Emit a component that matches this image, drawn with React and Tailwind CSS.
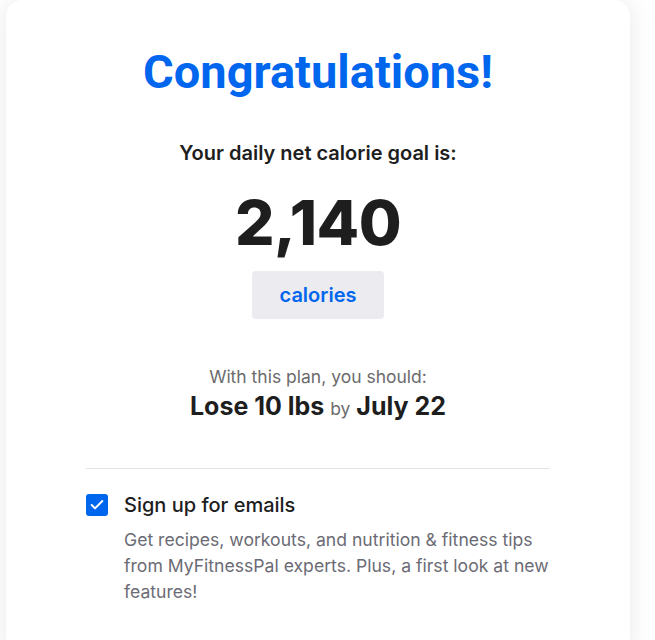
import { Check } from 'lucide-react';

export default function App() {
  return (
    <div className="min-h-[640px] bg-white pl-[6px] font-['Inter',sans-serif] text-[#1e1e1e]">
      <div className="w-[624px] min-h-[660px] rounded-2xl bg-white px-[80px] pt-[44px] shadow-[0_0_24px_rgba(0,0,0,0.09)]">
        <h1 className="text-center font-['Roboto',sans-serif] text-[47px] font-bold leading-[56px] text-[#0066ee]">
          Congratulations!
        </h1>

        <p className="mt-[39px] text-center text-[20px] font-semibold leading-[28px]">
          Your daily net calorie goal is:
        </p>
        <p className="mt-[18px] text-center text-[62px] font-extrabold leading-[76px] tracking-[-0.5px]">
          2,140
        </p>
        <div className="mt-[10px] flex justify-center">
          <button className="h-[48px] w-[132px] rounded-[4px] bg-[#ebebf0] text-[20px] font-semibold text-[#0066ee]">
            calories
          </button>
        </div>

        <p className="mt-[45px] text-center text-[17.5px] leading-[26px] text-[#6b6b6b]">
          With this plan, you should:
        </p>
        <p className="mt-[1px] text-center text-[25px] font-bold leading-[30px]">
          Lose 10 lbs <span className="text-[17.5px] font-normal text-[#6b6b6b]">by</span> July 22
        </p>

        <hr className="mt-[44px] border-t border-[#e2e2e2]" />

        <div className="mt-[22px] flex gap-[16px]">
          <div className="mt-[3px] flex h-[22px] w-[22px] shrink-0 items-center justify-center rounded-[3px] bg-[#0066ee]">
            <Check className="h-[16px] w-[16px] text-white" strokeWidth={3} />
          </div>
          <div>
            <p className="text-[20px] font-medium leading-[28px]">Sign up for emails</p>
            <p className="mt-[8px] text-[17.6px] leading-[26px] text-[#6b6b75]">
              Get recipes, workouts, and nutrition &amp; fitness tips from MyFitnessPal experts. Plus, a first look at new features!
            </p>
          </div>
        </div>
      </div>
    </div>
  );
}
